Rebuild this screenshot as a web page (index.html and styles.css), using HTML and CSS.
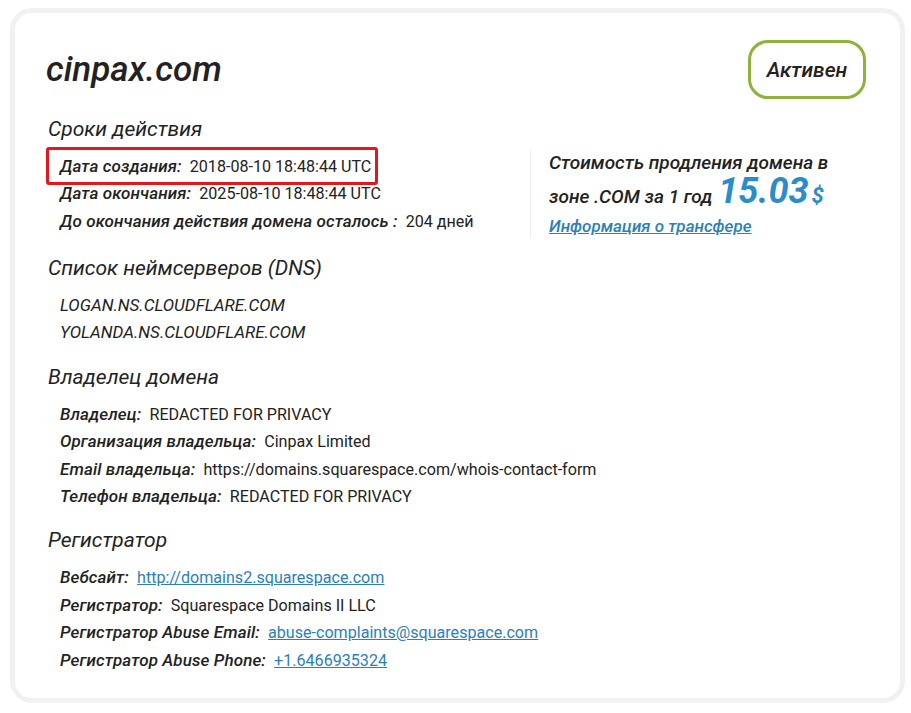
FILE: index.html
```html
<!DOCTYPE html>
<html lang="ru">
<head>
<meta charset="utf-8">
<title>cinpax.com</title>
<link rel="stylesheet" href="styles.css">
</head>
<body>
<div class="card">
  <div class="header">
    <h1 class="domain">cinpax.com</h1>
    <div class="badge">Активен</div>
  </div>

  <section class="section">
    <h2 class="sec-title">Сроки действия</h2>
    <div class="terms">
      <div class="rows">
        <div class="row"><span class="mark"><span class="lbl">Дата создания:</span> <span class="val">2018-08-10 18:48:44 UTC</span></span></div>
        <div class="row"><span class="lbl">Дата окончания:</span> <span class="val">2025-08-10 18:48:44 UTC</span></div>
        <div class="row"><span class="lbl">До окончания действия домена осталось :</span> <span class="val">204 дней</span></div>
      </div>
      <div class="price">
        <div class="price-line">Стоимость продления домена в</div>
        <div class="price-line">зоне .COM за 1 год <span class="amount">15.03</span><span class="cur">$</span></div>
        <a class="transfer" href="#">Информация о трансфере</a>
      </div>
    </div>
  </section>

  <section class="section">
    <h2 class="sec-title">Список неймсерверов (DNS)</h2>
    <div class="rows">
      <div class="row"><span class="lbl ns">LOGAN.NS.CLOUDFLARE.COM</span></div>
      <div class="row"><span class="lbl ns">YOLANDA.NS.CLOUDFLARE.COM</span></div>
    </div>
  </section>

  <section class="section">
    <h2 class="sec-title">Владелец домена</h2>
    <div class="rows">
      <div class="row"><span class="lbl">Владелец:</span> <span class="val">REDACTED FOR PRIVACY</span></div>
      <div class="row"><span class="lbl">Организация владельца:</span> <span class="val">Cinpax Limited</span></div>
      <div class="row"><span class="lbl">Email владельца:</span> <span class="val">https://domains.squarespace.com/whois-contact-form</span></div>
      <div class="row"><span class="lbl">Телефон владельца:</span> <span class="val">REDACTED FOR PRIVACY</span></div>
    </div>
  </section>

  <section class="section">
    <h2 class="sec-title">Регистратор</h2>
    <div class="rows">
      <div class="row"><span class="lbl">Вебсайт:</span> <a class="val link" href="#">http://domains2.squarespace.com</a></div>
      <div class="row"><span class="lbl">Регистратор:</span> <span class="val">Squarespace Domains II LLC</span></div>
      <div class="row"><span class="lbl">Регистратор Abuse Email:</span> <a class="val link" href="#">abuse-complaints@squarespace.com</a></div>
      <div class="row"><span class="lbl">Регистратор Abuse Phone:</span> <a class="val link" href="#">+1.6466935324</a></div>
    </div>
  </section>
</div>
</body>
</html>
```

FILE: styles.css
```css
* { box-sizing: border-box; }

html, body {
  margin: 0;
  padding: 0;
  background: #ffffff;
}

body {
  font-family: Roboto, "Liberation Sans", sans-serif;
  color: #222222;
}

.card {
  margin: 8px 6px 10px 10px;
  height: 695px;
  border: 5px solid #f1f1f1;
  border-radius: 22px;
  background: #ffffff;
  padding: 27px 34px 0 31px;
}

.header {
  display: flex;
  justify-content: space-between;
  align-items: center;
}

.domain {
  margin: 0;
  font-size: 35px;
  font-style: italic;
  font-weight: 500;
  line-height: 40px;
  color: #222222;
}

.badge {
  width: 118px;
  height: 59px;
  border: 3px solid #8db33a;
  border-radius: 20px;
  display: flex;
  align-items: center;
  justify-content: center;
  font-size: 21px;
  font-style: italic;
  font-weight: 500;
  color: #222222;
}

.section {
  margin-top: 15px;
}

.sec-title {
  margin: 0 0 9px 2px;
  font-size: 21px;
  line-height: 30px;
  font-style: italic;
  font-weight: 400;
  color: #222222;
}

.terms {
  display: grid;
  grid-template-columns: 484px 1fr;
  align-items: start;
}

.rows {
  padding-left: 14px;
}

.row {
  font-size: 17px;
  line-height: 27.4px;
  white-space: nowrap;
}

.lbl {
  font-style: italic;
  font-weight: 500;
  font-size: 17px;
  letter-spacing: 0.1px;
  color: #222222;
}

.lbl.ns {
  font-weight: 400;
  letter-spacing: 0;
}

.val {
  font-weight: 400;
  color: #222222;
  margin-left: 4px;
  font-size: 16.1px;
}

.link {
  color: #2b80b9;
  text-decoration: underline;
}

.mark {
  position: relative;
  display: inline-block;
}
.mark::after {
  content: "";
  position: absolute;
  left: -14px;
  right: -7px;
  top: -6px;
  bottom: -5px;
  border: 3px solid #e3181c;
  border-radius: 3px;
}

.price {
  margin-top: -4px;
  border-left: 1px solid #f0f0f0;
  padding: 0 0 8px 18px;
  height: 89px;
}

.price-line {
  font-size: 19px;
  font-style: italic;
  font-weight: 500;
  line-height: 28px;
  white-space: nowrap;
}

.amount {
  font-size: 36px;
  font-weight: 700;
  color: #2a8ccb;
  line-height: 28px;
  margin-left: 1px;
}

.cur {
  font-size: 22px;
  font-weight: 700;
  color: #2a8ccb;
  margin-left: 3px;
}

.transfer {
  display: inline-block;
  margin-top: 5px;
  font-size: 17px;
  font-style: italic;
  font-weight: 500;
  color: #2b80b9;
  text-decoration: underline;
}
```
